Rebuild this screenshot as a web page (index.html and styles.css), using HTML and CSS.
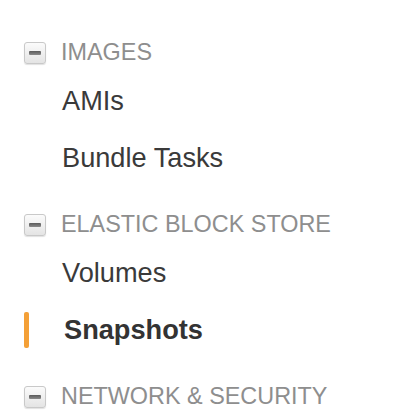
FILE: index.html
```html
<!DOCTYPE html>
<html>
<head>
<meta charset="utf-8">
<link rel="stylesheet" href="styles.css">
</head>
<body>
<nav class="nav">
  <section class="group">
    <div class="group-head"><span class="toggle"><span class="dash"></span></span><span class="group-title">IMAGES</span></div>
    <ul class="items">
      <li class="item">AMIs</li>
      <li class="item">Bundle Tasks</li>
    </ul>
  </section>
  <section class="group">
    <div class="group-head"><span class="toggle"><span class="dash"></span></span><span class="group-title">ELASTIC BLOCK STORE</span></div>
    <ul class="items">
      <li class="item">Volumes</li>
      <li class="item active">Snapshots</li>
    </ul>
  </section>
  <section class="group">
    <div class="group-head"><span class="toggle"><span class="dash"></span></span><span class="group-title">NETWORK &amp; SECURITY</span></div>
  </section>
</nav>
</body>
</html>
```

FILE: styles.css
```css
html, body {
  margin: 0;
  padding: 0;
  background: #ffffff;
}
body {
  font-family: "Liberation Sans", Arial, sans-serif;
  width: 406px;
  height: 416px;
  overflow: hidden;
}
.nav {
  padding: 36px 0 0 24px;
  display: flex;
  flex-direction: column;
  gap: 32px;
}
.group {
  display: flex;
  flex-direction: column;
}
.group-head {
  display: flex;
  align-items: center;
  height: 32px;
  gap: 15px;
}
.toggle {
  width: 22px;
  height: 22px;
  box-sizing: border-box;
  border: 1px solid #c9c9c9;
  border-radius: 3px;
  background: linear-gradient(#fbfbfb, #e4e4e4);
  box-shadow: 0 1px 1px rgba(0,0,0,0.12);
  display: flex;
  align-items: center;
  justify-content: center;
  margin-top: 2px;
}
.dash {
  width: 12px;
  height: 4px;
  border-radius: 1px;
  background: linear-gradient(#5a5a5a, #8a8a8a);
}
.group-title {
  font-size: 23.4px;
  line-height: 32px;
  color: #8e8e8e;
}
.items {
  list-style: none;
  margin: 15px 0 0 0;
  padding: 0;
  display: flex;
  flex-direction: column;
  gap: 21px;
}
.item {
  position: relative;
  height: 36px;
  line-height: 36px;
  padding-left: 38px;
  font-size: 27.2px;
  color: #3a3a3a;
}
.item.active {
  font-weight: bold;
  color: #333333;
  padding-left: 40px;
}
.item.active::before {
  content: "";
  position: absolute;
  left: 0;
  top: 0;
  width: 5px;
  height: 36px;
  border-radius: 2px;
  background: #f4a037;
}
```
